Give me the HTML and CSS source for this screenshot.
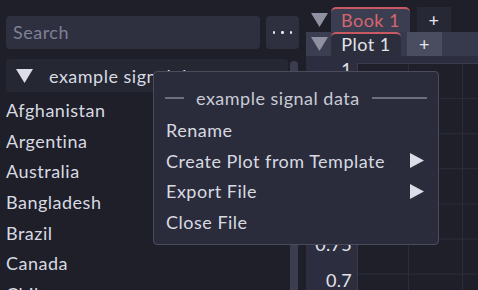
FILE: index.html
```html
<!DOCTYPE html>
<html>
<head>
<meta charset="utf-8">
<link rel="stylesheet" href="styles.css">
</head>
<body>
<div class="app">
  <div class="left">
    <div class="search-row">
      <div class="search">Search</div>
      <div class="more"><i></i><i></i><i></i></div>
    </div>
    <div class="tree">
      <div class="tree-main">
        <div class="tree-head">
          <svg class="tri" width="17" height="14" viewBox="0 0 17 14"><polygon points="0,0 17,0 8.5,14" fill="#dcdde6"/></svg>
          <span>example signal data</span>
        </div>
        <div class="item">Afghanistan</div>
        <div class="item">Argentina</div>
        <div class="item">Australia</div>
        <div class="item">Bangladesh</div>
        <div class="item">Brazil</div>
        <div class="item">Canada</div>
        <div class="item">Chile</div>
      </div>
      <div class="scroll"></div>
    </div>
  </div>
  <div class="right">
    <div class="book-row">
      <div class="tri-cell"><svg width="17" height="14" viewBox="0 0 17 14"><polygon points="0,0 17,0 8.5,14" fill="#8f91a3"/></svg></div>
      <div class="tab book">Book 1</div>
      <div class="plus dark">+</div>
    </div>
    <div class="plot-row">
      <div class="tri-cell box"><svg width="17" height="14" viewBox="0 0 17 14"><polygon points="0,0 17,0 8.5,14" fill="#8f91a3"/></svg></div>
      <div class="tab plot">Plot 1</div>
      <div class="plus light">+</div>
    </div>
    <div class="chart">
      <div class="axis">
        <span>1</span><span>0.95</span><span>0.9</span><span>0.85</span><span>0.8</span><span>0.75</span><span>0.7</span>
      </div>
      <div class="plot-area">
        <div class="plot-top"></div>
        <div class="grid"></div>
      </div>
    </div>
  </div>
  <div class="menu">
    <div class="menu-head"><span class="ln short"></span><span class="ttl">example signal data</span><span class="ln long"></span></div>
    <div class="mi">Rename</div>
    <div class="mi">Create Plot from Template<svg class="arr" width="14" height="15" viewBox="0 0 14 15"><polygon points="0,0 14,7.5 0,15" fill="#dcdde6"/></svg></div>
    <div class="mi">Export File<svg class="arr" width="14" height="15" viewBox="0 0 14 15"><polygon points="0,0 14,7.5 0,15" fill="#dcdde6"/></svg></div>
    <div class="mi">Close File</div>
  </div>
</div>
</body>
</html>
```

FILE: styles.css
```css
* { box-sizing: border-box; }
html, body { margin: 0; padding: 0; }
body {
  background: #1e1f29;
  font-family: Lato, "Liberation Sans", sans-serif;
  font-size: 18px;
  letter-spacing: 0.5px;
  color: #d8dae2;
  width: 478px;
  height: 290px;
  overflow: hidden;
}
.app {
  position: relative;
  display: flex;
  width: 478px;
  height: 290px;
  gap: 7px;
  overflow: hidden;
}
.left {
  width: 299px;
  flex: none;
  padding: 16px 0 0 6px;
  display: flex;
  flex-direction: column;
  overflow: hidden;
}
.search-row { display: flex; gap: 6px; height: 33px; flex: none; }
.search {
  width: 254px;
  background: #2e3040;
  border-radius: 4px;
  color: #7d8096;
  padding-left: 7px;
  line-height: 33px;
}
.more {
  width: 33px;
  background: #2e3040;
  border-radius: 4px;
  display: flex;
  align-items: center;
  justify-content: center;
  gap: 6px;
}
.more i { width: 2.5px; height: 2.5px; background: #e6e7ee; border-radius: 50%; }
.tree { display: flex; margin-top: 10px; gap: 2px; flex: 1; min-height: 0; }
.tree-main { width: 282px; overflow: hidden; }
.tree-head {
  height: 33px;
  background: #252733;
  border-radius: 3px;
  display: flex;
  align-items: center;
  padding-left: 10px;
  gap: 16px;
  white-space: nowrap;
  overflow: hidden;
}
.tree-head span { color: #d8dae2; }
.item { height: 30.7px; line-height: 30.7px; white-space: nowrap; color: #d8dae2; }
.tree-head + .item { margin-top: 3px; }
.scroll {
  width: 8px;
  margin-top: 2px;
  background: #3c3e50;
  border-radius: 4px 4px 0 0;
}
.right { flex: 1; display: flex; flex-direction: column; padding-top: 7px; min-width: 0; }
.book-row { display: flex; height: 25px; flex: none; }
.tri-cell { width: 25px; display: flex; align-items: center; justify-content: center; padding-left: 2px; }
.tab {
  border-top: 2px solid #c95a63;
  border-radius: 5px 5px 0 0;
  text-align: center;
  white-space: nowrap;
  line-height: 22px;
}
.book { width: 79px; background: #3b3d50; color: #d5666f; }
.plus {
  display: flex; align-items: center; justify-content: center;
  font-size: 18px; color: #e6e7ee;
}
.plus.dark { width: 34px; margin-left: 7px; background: #262835; }
.plot-row { display: flex; height: 24px; background: #373a4c; flex: none; }
.tri-cell.box { background: #3b3d50; }
.plot { width: 70px; background: #2c2e3d; color: #e2e3ea; line-height: 21px; }
.plus.light { width: 35px; margin-left: 6px; background: #4a4c5f; }
.chart { flex: 1; display: flex; min-height: 0; overflow: hidden; }
.axis {
  width: 51px;
  flex: none;
  background: #2c2e3f;
  display: flex;
  flex-direction: column;
  align-items: flex-end;
  padding: 2px 5px 0 0;
  gap: 13.1px;
}
.axis span { line-height: 22px; height: 22px; color: #e2e3ea; letter-spacing: 0.3px; }
.plot-area { flex: 1; display: flex; flex-direction: column; }
.plot-top { height: 7px; background: #2c2e3f; flex: none; }
.grid {
  flex: 1;
  border-top: 1px solid #3a3c4c;
  border-left: 1px solid #3a3c4c;
  background-color: #1e1f29;
  background-image:
    linear-gradient(to bottom, transparent 34px, #2b2d3a 34px, #2b2d3a 35px, transparent 35px),
    linear-gradient(to right, transparent 50px, #2b2d3a 50px, #2b2d3a 51px, transparent 51px);
  background-size: 100% 35.1px, 54px 100%;
  background-position: 0 0, 0 0;
}
.menu {
  position: absolute;
  left: 153px;
  top: 71px;
  width: 286px;
  height: 174px;
  background: #2a2c3b;
  border: 1px solid #4a4c5e;
  border-radius: 4px;
  padding: 11px 11px 7px 11px;
}
.menu-head {
  height: 30px;
  margin-bottom: 2px;
  display: flex;
  align-items: center;
}
.ln { height: 2px; background: #6e7082; }
.ln.short { width: 19px; }
.ln.long { flex: 1; }
.ttl { padding: 0 12px; color: #c9cbd6; white-space: nowrap; }
.mi {
  height: 30.5px;
  line-height: 30.5px;
  padding-left: 1px;
  display: flex;
  align-items: center;
  justify-content: space-between;
  padding-right: 3px;
  white-space: nowrap;
}
.arr { flex: none; }
```
